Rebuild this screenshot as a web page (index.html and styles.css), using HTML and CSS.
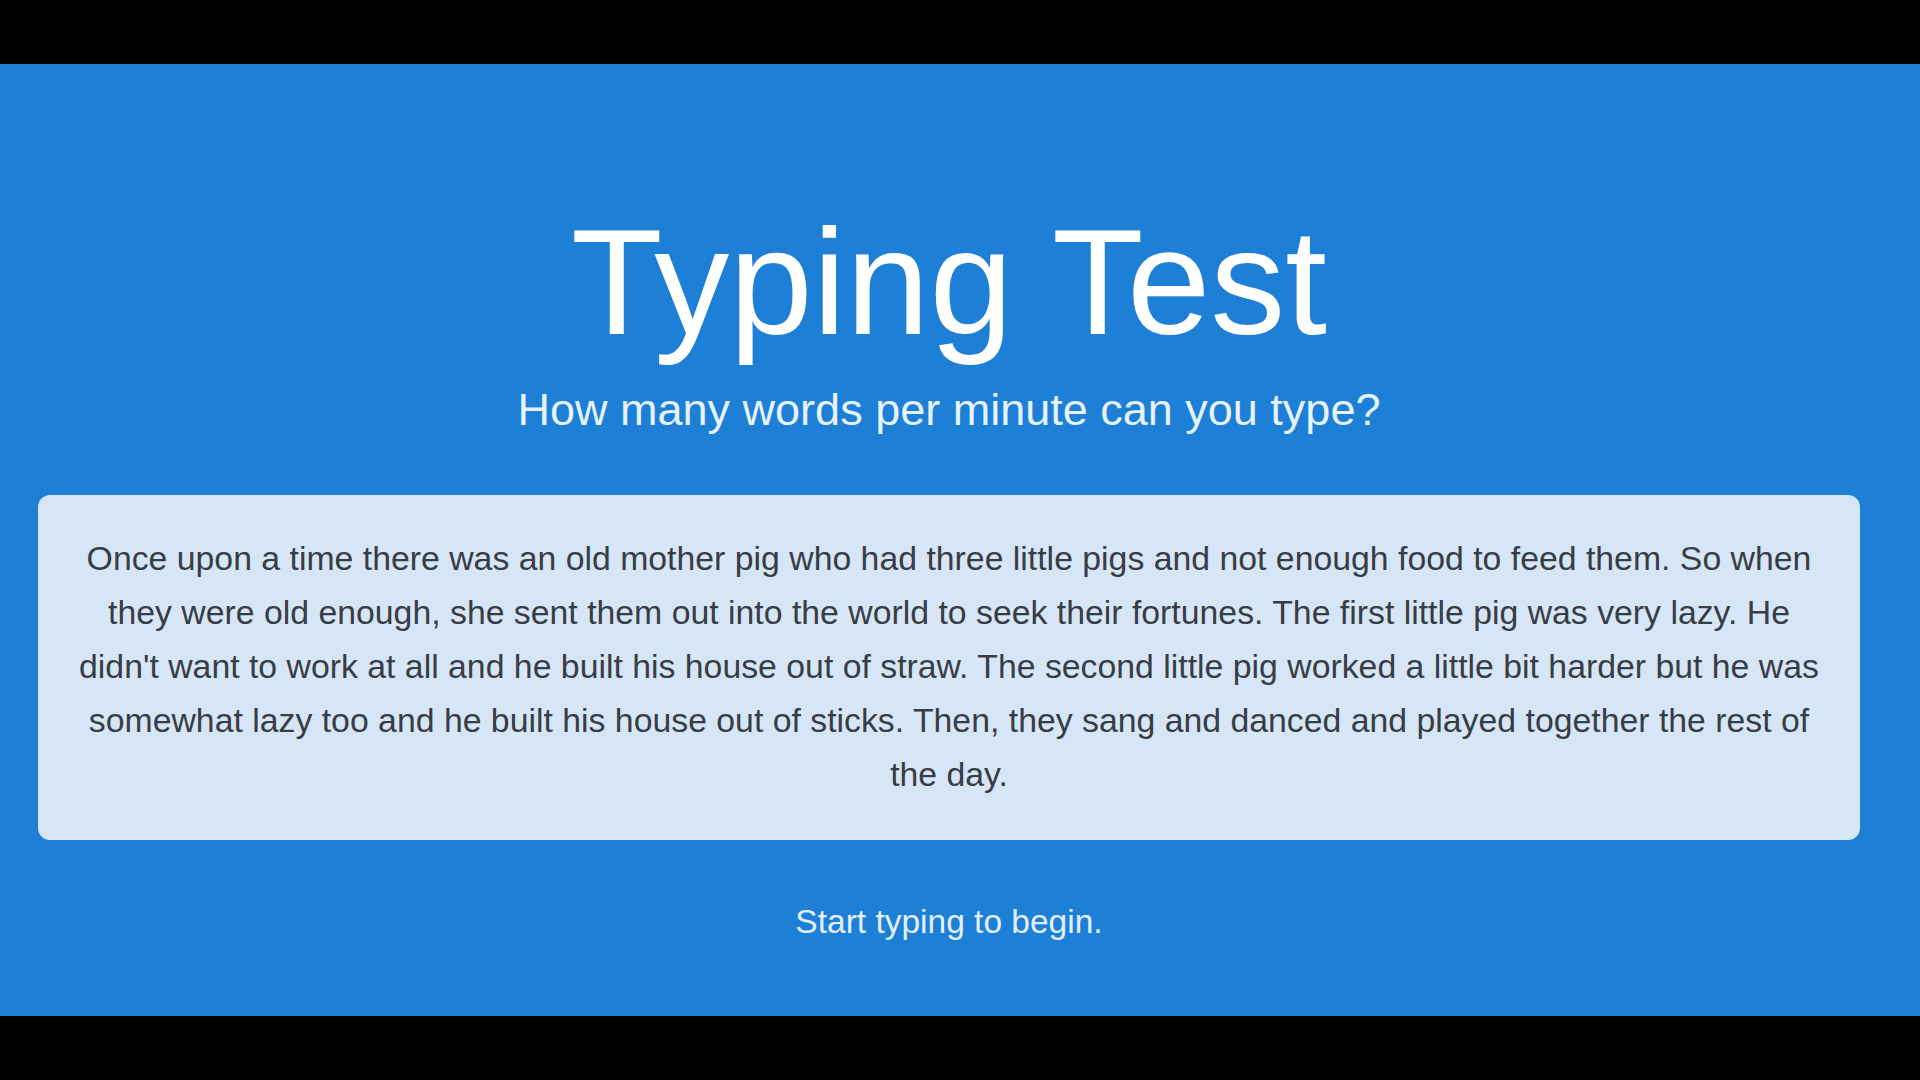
FILE: index.html
```html
<!DOCTYPE html>
<html lang="en">
<head>
<meta charset="utf-8">
<title>Typing Test</title>
<link rel="stylesheet" href="styles.css">
</head>
<body>
<main class="page">
  <h1 class="title">Typing Test</h1>
  <p class="subtitle">How many words per minute can you type?</p>
  <div class="passage">Once upon a time there was an old mother pig who had three little pigs and not enough food to feed them. So when they were old enough, she sent them out into the world to seek their fortunes. The first little pig was very lazy. He didn't want to work at all and he built his house out of straw. The second little pig worked a little bit harder but he was somewhat lazy too and he built his house out of sticks. Then, they sang and danced and played together the rest of the day.</div>
  <p class="status">Start typing to begin.</p>
</main>
</body>
</html>
```

FILE: styles.css
```css
html, body {
  margin: 0;
  padding: 0;
}
body {
  background: #000;
  width: 1920px;
  height: 1080px;
  overflow: hidden;
  font-family: "Liberation Sans", Arial, sans-serif;
}
.page {
  box-sizing: border-box;
  margin-top: 64px;
  height: 952px;
  background: #1d7fd6;
  padding: 143px 60px 0 38px;
  display: flex;
  flex-direction: column;
  align-items: stretch;
  text-align: center;
}
.title {
  margin: 0;
  font-size: 150px;
  line-height: 1;
  font-weight: 400;
  color: #ffffff;
}
.subtitle {
  margin: 30px 0 0;
  font-size: 45px;
  line-height: 1;
  color: #e6f2fc;
}
.passage {
  margin-top: 63px;
  background: #d6e6f6;
  border-radius: 12px;
  padding: 36px 30px 39px;
  font-size: 33.8px;
  line-height: 54px;
  color: #383d45;
}
.status {
  margin: 65px 0 0;
  font-size: 33.5px;
  line-height: 1;
  color: #e3f0fb;
}
```
